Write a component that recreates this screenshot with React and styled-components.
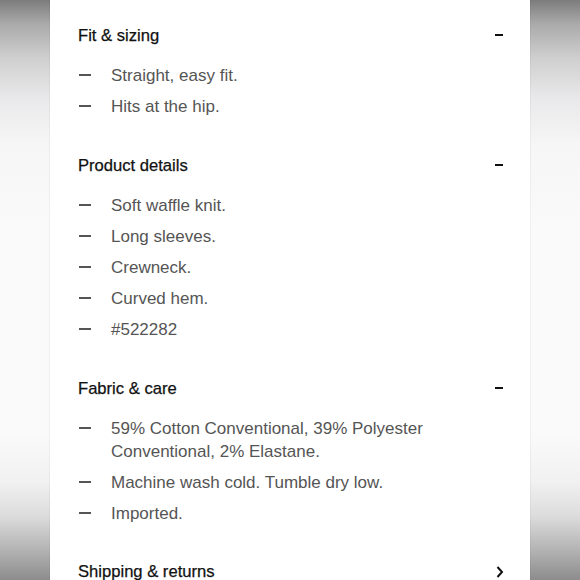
import React from "react";
import styled, { createGlobalStyle } from "styled-components";

const Global = createGlobalStyle`
  html, body { margin: 0; padding: 0; }
  body {
    height: 580px;
    overflow: hidden;
    background: linear-gradient(
      to bottom,
      #7c7c7c 0%,
      #a9a9a9 4%,
      #cfcfcf 10%,
      #e9e9eb 17%,
      #f6f6f6 25%,
      #fafafa 40%,
      #fafafa 75%,
      #f1f1f1 83%,
      #dcdcdc 89%,
      #b2b2b2 95%,
      #8c8c8c 100%
    );
    font-family: "Liberation Sans", Arial, sans-serif;
  }
`;

const Stage = styled.div`
  display: flex;
  justify-content: center;
  height: 580px;
`;

const Panel = styled.main`
  width: 480px;
  background: #ffffff;
  box-shadow: 0 0 0 1px rgba(0, 0, 0, 0.04);
  padding: 24px 27px 0 28px;
  box-sizing: border-box;
  display: flex;
  flex-direction: column;
  gap: 35.4px;
`;

const Section = styled.section`
  display: flex;
  flex-direction: column;
  gap: 17px;
`;

const Header = styled.div`
  display: flex;
  align-items: center;
  justify-content: space-between;
  height: 23px;
`;

const Title = styled.h2`
  margin: 0;
  font-size: 16.6px;
  line-height: 23px;
  font-weight: 400;
  color: #111;
  -webkit-text-stroke: 0.25px #111;
`;

const Minus = styled.span`
  display: block;
  width: 8px;
  height: 2px;
  background: #111;
  margin-top: -1px;
`;

const List = styled.ul`
  list-style: none;
  margin: 0;
  padding: 0;
  display: flex;
  flex-direction: column;
  gap: 8.2px;
`;

const Item = styled.li`
  display: grid;
  grid-template-columns: 33px 1fr;
  font-size: 17px;
  line-height: 23px;
  color: #555;
  padding-right: 60px;
`;

const Dash = styled.span`
  display: block;
  width: 12px;
  height: 2px;
  background: #555;
  margin: 10px 0 0 1px;
`;

const Chevron = () => (
  <svg width="8" height="12" viewBox="0 0 8 12" style={{ marginRight: "-1px" }}>
    <path d="M1.5 1 L6 6 L1.5 11" fill="none" stroke="#111" strokeWidth="2" />
  </svg>
);

const sections = [
  { title: "Fit & sizing", items: ["Straight, easy fit.", "Hits at the hip."] },
  {
    title: "Product details",
    items: ["Soft waffle knit.", "Long sleeves.", "Crewneck.", "Curved hem.", "#522282"],
  },
  {
    title: "Fabric & care",
    items: [
      "59% Cotton Conventional, 39% Polyester Conventional, 2% Elastane.",
      "Machine wash cold. Tumble dry low.",
      "Imported.",
    ],
  },
];

export default function App() {
  return (
    <>
      <Global />
      <Stage>
        <Panel>
          {sections.map((s) => (
            <Section key={s.title}>
              <Header>
                <Title>{s.title}</Title>
                <Minus />
              </Header>
              <List>
                {s.items.map((it) => (
                  <Item key={it}>
                    <Dash />
                    <span>{it}</span>
                  </Item>
                ))}
              </List>
            </Section>
          ))}
          <Section>
            <Header>
              <Title>Shipping &amp; returns</Title>
              <Chevron />
            </Header>
          </Section>
        </Panel>
      </Stage>
    </>
  );
}
